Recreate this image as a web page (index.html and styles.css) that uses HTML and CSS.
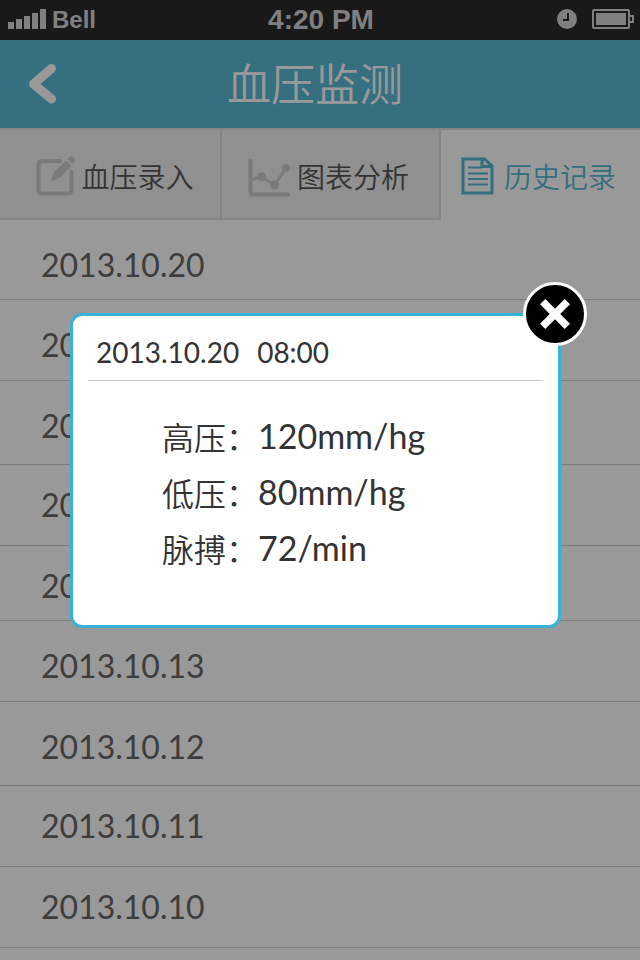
FILE: index.html
```html
<!DOCTYPE html>
<html lang="zh-CN">
<head>
<meta charset="utf-8">
<meta name="viewport" content="width=device-width, initial-scale=1">
<title>血压监测</title>
<link rel="stylesheet" href="styles.css">
</head>
<body>
<div class="status">
  <div class="status-left">
    <svg width="38" height="20" viewBox="0 0 38 20" fill="currentColor" aria-hidden="true"><path d="M0 13h6v7H0zM8 10h6v10H8zM16 7h6v13h-6zM24 4h6v16h-6zM32 0h6v20h-6z"/></svg>
    <span class="carrier">Bell</span>
  </div>
  <span class="clock">4:20 PM</span>
  <div class="status-right">
    <svg width="20" height="20" viewBox="0 0 20 20" aria-hidden="true"><circle cx="10" cy="10" r="10" fill="currentColor"/><path d="M11 4v7H6" fill="none" stroke="#2b2b2b" stroke-width="2"/></svg>
    <svg width="42" height="20" viewBox="0 0 42 20" aria-hidden="true"><rect x="1" y="1" width="36" height="18" rx="1" fill="none" stroke="currentColor" stroke-width="2"/><path d="M4 4h30v12H4z" fill="currentColor"/><path d="M38 7h3v6h-3" fill="none" stroke="currentColor" stroke-width="2"/></svg>
  </div>
</div>
<header class="header">
  <a class="back" href="#" aria-label="返回"><svg width="28" height="40" viewBox="0 0 28 40" fill="none" stroke="currentColor" stroke-width="9" stroke-linecap="round" stroke-linejoin="round"><path d="M23.500 4.500L5.500 20l18 15"/></svg></a>
  <h1 class="title">血压监测</h1>
</header>
<nav class="tabs">
  <a class="tab tab-entry" href="#">
    <svg width="40" height="40" viewBox="0 0 40 40" aria-hidden="true"><path d="M24 5H6Q2.500 5 2.500 8.500V34q0 3.500 3.500 3.500h26q3.500 0 3.500-3.500V16" fill="none" stroke="currentColor" stroke-width="4" stroke-linecap="round"/><path d="M15 25l3-9L30 4.500l5.500 5.500-12 12zM31.500 3L34 .5q1-.8 2 0l3 3q.8 1 0 2L36.500 8z" fill="currentColor"/></svg>
    <span>血压录入</span>
  </a>
  <a class="tab" href="#">
    <svg width="42" height="41" viewBox="0 0 42 41" aria-hidden="true"><g fill="none" stroke="currentColor" stroke-linecap="round"><path d="M2.500 5v30q0 3.500 3.500 3.500h34" stroke-width="4"/><path d="M2.500 24L14 21l12.500 8L38 12" stroke-width="3"/></g><g fill="currentColor"><circle cx="14" cy="21" r="4.500"/><circle cx="26.500" cy="29" r="4.500"/><circle cx="38" cy="12" r="4"/></g></svg>
    <span>图表分析</span>
  </a>
  <a class="tab tab-active" href="#" aria-current="page">
    <svg width="33" height="38" viewBox="0 0 33 38" fill="none" stroke="currentColor" aria-hidden="true"><path d="M2 2h21.500L31 9v27H2zM21 2v7.500h10" stroke-width="3"/><path d="M7 10.500h13M7 16.500h20M7 22h20M7 27.500h20" stroke-width="2"/></svg>
    <span>历史记录</span>
  </a>
</nav>
<main>
  <ul class="records">
    <li class="record">2013.10.20</li>
    <li class="record">2013.10.19</li>
    <li class="record">2013.10.18</li>
    <li class="record record-high">2013.10.15</li>
    <li class="record record-high">2013.10.14</li>
    <li class="record">2013.10.13</li>
    <li class="record">2013.10.12</li>
    <li class="record record-high">2013.10.11</li>
    <li class="record record-high">2013.10.10</li>
  </ul>
</main>
<div class="overlay">
  <section class="dialog" role="dialog" aria-modal="true" aria-labelledby="dialog-title">
    <h2 class="dialog-title" id="dialog-title"><span>2013.10.20</span><span>08:00</span></h2>
    <dl class="readings">
      <dt>高压：</dt><dd>120mm/hg</dd>
      <dt>低压：</dt><dd>80mm/hg</dd>
      <dt>脉搏：</dt><dd>72/min</dd>
    </dl>
    <button class="close" type="button" aria-label="关闭"><svg width="30" height="30" viewBox="0 0 28 28" fill="none" stroke="currentColor" stroke-width="7"><path d="M2.500 2.500l23 23M25.500 2.500l-23 23"/></svg></button>
  </section>
</div>
</body>
</html>
```
FILE: styles.css
```css
* {
  box-sizing: border-box;
}

body {
  position: relative;
  min-height: 100vh;
  margin: 0;
  background: #fff;
  color: #333;
  font-family: Lato, "Noto Sans CJK SC", sans-serif;
}

svg {
  display: block;
  flex: none;
}

a {
  text-decoration: none;
}

.status {
  display: grid;
  grid-template-columns: 1fr auto 1fr;
  align-items: center;
  height: 40px;
  padding: 0 6px 2px 8px;
  background: #2b2b2b;
  color: #d6d6d6;
  font-family: "Liberation Sans", Arial, sans-serif;
  font-weight: bold;
}

.status-left,
.status-right {
  display: flex;
  align-items: center;
}

.status-left {
  gap: 6px;
}

.status-right {
  justify-content: flex-end;
  gap: 15px;
}

.carrier,
.clock {
  padding-top: 2px;
}

.carrier {
  font-size: 24px;
}

.clock {
  font-size: 28px;
}

.header {
  display: grid;
  grid-template-columns: 1fr auto 1fr;
  align-items: center;
  height: 88px;
  padding: 0 38px 0 28px;
  background: #5bbad4;
  color: #fff;
}

.back {
  justify-self: start;
  color: #fff;
}

.title {
  margin: 0;
  padding-bottom: 4px;
  font-family: "Noto Sans CJK SC", sans-serif;
  font-size: 44px;
  font-weight: 350;
  line-height: 64px;
}

.tabs {
  display: grid;
  grid-template-columns: 222fr 219fr 199fr;
  height: 92px;
  border-top: 2px solid #e0e0e0;
}

.tab {
  display: flex;
  align-items: center;
  justify-content: center;
  gap: 7px;
  padding: 4px 4px 0 0;
  border-right: 2px solid #dedede;
  border-bottom: 2px solid #dedede;
  background: #f0f0f0;
  color: #555;
  font-family: "Noto Sans CJK SC", sans-serif;
  font-size: 28px;
  font-weight: 350;
}

.tab svg {
  color: #cbcbcb;
}

.tab-entry {
  gap: 5px;
  padding-right: 0;
  padding-left: 10px;
}

.tab-active,
.tab-active svg {
  color: #55b8d3;
}

.tab-active {
  gap: 10px;
  padding-top: 2px;
  border: 0;
  background: #fff;
}

.records {
  display: grid;
  grid-template-rows: 80px 81px 84px 81px 75px 81px 84px 81px 81px;
  margin: 0;
  padding: 0;
  list-style: none;
}

.record {
  padding: 29px 41px 0;
  border-bottom: 1px solid #cbcbcb;
  color: #666;
  font-size: 32px;
  line-height: 32px;
}

.record-high {
  padding-top: 24px;
}

.overlay {
  position: absolute;
  inset: 0;
  padding: 313px 79px 0 70px;
  background: rgba(0, 0, 0, 0.4);
}

.dialog {
  position: relative;
  padding: 16px 15px 49px;
  border: 3px solid #36b3d6;
  border-radius: 12px;
  background: #fff;
}

.dialog-title {
  display: flex;
  gap: 18px;
  margin: 0;
  padding: 0 8px 8px;
  border-bottom: 1px solid #c8c8c8;
  font-size: 28px;
  font-weight: 400;
  line-height: 40px;
}

.readings {
  display: grid;
  grid-template-columns: 96px 1fr;
  grid-auto-rows: 56px;
  margin: 0;
  padding: 27px 0 0 74px;
  line-height: 56px;
}

.readings dt {
  font-family: "Noto Sans CJK SC", sans-serif;
  font-size: 32px;
  font-weight: 350;
}

.readings dd {
  margin: 0;
  font-size: 34px;
}

.close {
  position: absolute;
  top: -34px;
  right: -29px;
  display: grid;
  place-items: center;
  width: 64px;
  height: 64px;
  padding: 0;
  border: 3px solid #fff;
  border-radius: 50%;
  background: #000;
  color: #fff;
}
```
